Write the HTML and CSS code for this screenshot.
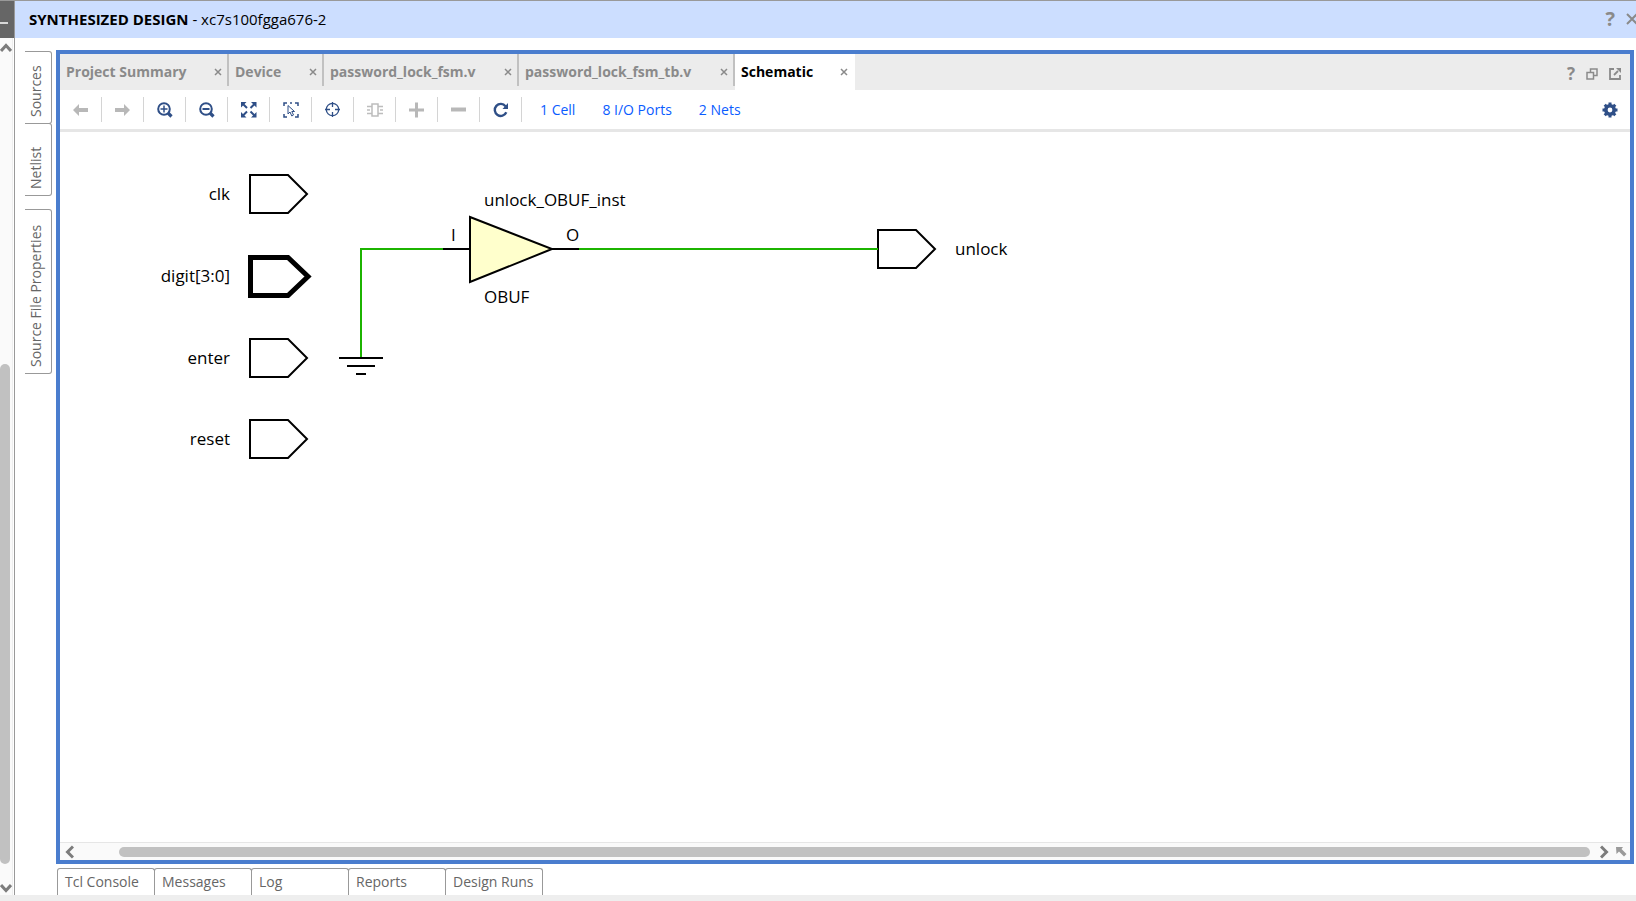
FILE: index.html
```html
<!DOCTYPE html>
<html lang="en">
<head>
<meta charset="utf-8">
<title>Synthesized Design</title>
<link rel="stylesheet" href="styles.css">
</head>
<body>
<div class="app">
  <aside class="rail">
    <button class="rail-head" aria-label="Minimize"><svg width="14" height="37"><path d="M0 22H8" stroke="#d8d8d8" stroke-width="2"/></svg></button>
    <div class="vscroll">
      <button class="arrow" aria-label="Scroll up"><svg width="12" height="20"><path d="M1 13L6 7.500L11 13" fill="none" stroke="#7c7c7c" stroke-width="3"/></svg></button>
      <div class="vtrack"><div class="vthumb"></div></div>
      <button class="arrow" aria-label="Scroll down"><svg width="12" height="20"><path d="M1 10L6 15.500L11 10" fill="none" stroke="#7c7c7c" stroke-width="3"/></svg></button>
    </div>
  </aside>
  <div class="main">
    <header class="title">
      <h1>SYNTHESIZED DESIGN<span> - xc7s100fgga676-2</span></h1>
      <button class="help big" aria-label="Help">?</button>
      <button class="close-big" aria-label="Close"><svg width="10" height="12"><path d="M1 1L11 11M11 1L1 11" stroke="#8a8a8a" stroke-width="2"/></svg></button>
    </header>
    <div class="work">
      <nav class="side">
        <button>Sources</button>
        <button>Netlist</button>
        <button class="tall">Source File Properties</button>
      </nav>
      <div class="center">
        <section class="panel">
          <div class="tabs">
            <div class="tab t1"><button class="name">Project Summary</button><button class="x" aria-label="Close tab"><svg width="8" height="8"><path d="M1 1L7 7M7 1L1 7"/></svg></button></div>
            <div class="tab t2"><button class="name">Device</button><button class="x" aria-label="Close tab"><svg width="8" height="8"><path d="M1 1L7 7M7 1L1 7"/></svg></button></div>
            <div class="tab t3"><button class="name">password_lock_fsm.v</button><button class="x" aria-label="Close tab"><svg width="8" height="8"><path d="M1 1L7 7M7 1L1 7"/></svg></button></div>
            <div class="tab t4"><button class="name">password_lock_fsm_tb.v</button><button class="x" aria-label="Close tab"><svg width="8" height="8"><path d="M1 1L7 7M7 1L1 7"/></svg></button></div>
            <div class="tab t5 active"><button class="name">Schematic</button><button class="x" aria-label="Close tab"><svg width="8" height="8"><path d="M1 1L7 7M7 1L1 7"/></svg></button></div>
            <div class="panel-actions">
              <button class="help" aria-label="Help">?</button>
              <button aria-label="Restore"><svg width="12" height="12" fill="none" stroke="#8a8a8a" stroke-width="1.500"><path d="M4.500 4V1H11V7.500H8"/><path d="M1 4.500H7.500V11H1Z"/></svg></button>
              <button aria-label="Float"><svg width="12" height="12" fill="none" stroke="#8a8a8a" stroke-width="1.800"><path d="M5 1H1V11H11V7"/><path d="M5 7L9 3"/><path d="M7 0H12V5Z" fill="#8a8a8a" stroke="none"/></svg></button>
            </div>
          </div>
          <div class="toolbar">
            <button class="tool" aria-label="Previous"><svg width="16" height="16"><path d="M0 8L6 2V6H15V10H6V14Z" fill="#b8b8b8"/></svg></button>
            <button class="tool" aria-label="Next"><svg width="16" height="16"><path d="M15 8L9 2V6H0V10H9V14Z" fill="#b8b8b8"/></svg></button>
            <button class="tool" aria-label="Zoom in"><svg width="16" height="16" fill="none" stroke="#2f4f87"><circle cx="7" cy="7" r="5.800" stroke-width="2"/><path d="M3.500 7H10.500M7 3.500V10.500" stroke-width="1.500"/><path d="M11 11L14.500 14.500" stroke-width="3.200"/></svg></button>
            <button class="tool" aria-label="Zoom out"><svg width="16" height="16" fill="none" stroke="#2f4f87"><circle cx="7" cy="7" r="5.800" stroke-width="2"/><path d="M3.500 7H10.500" stroke-width="2"/><path d="M11 11L14.500 14.500" stroke-width="3.200"/></svg></button>
            <button class="tool" aria-label="Zoom fit"><svg width="16" height="16"><g fill="#2f4f87"><path d="M0 0H5.500L0 5.500ZM15.500 0V5.500L10 0ZM0 15.500V10L5.500 15.500ZM15.500 15.500H10L15.500 10Z"/></g><path d="M2 2L6 6M13.500 2L9.500 6M2 13.500L6 9.500M13.500 13.500L9.500 9.500" stroke="#2f4f87" stroke-width="2"/></svg></button>
            <button class="tool" aria-label="Select area"><svg width="16" height="16" fill="none" stroke="#2f4f87"><path d="M1 4V1H4M7 1H9M12 1H15V4M1 12V15H4M12 15H15V12" stroke-width="1.500"/><path d="M5 3.500V12L7 10L8.800 14L10.500 13L8.800 9.500H11.500Z" stroke-width="1"/></svg></button>
            <button class="tool" aria-label="Autofit selection"><svg width="16" height="16" fill="none" stroke="#2f4f87" stroke-width="1.300"><circle cx="7.500" cy="7.500" r="6.200"/><path d="M7.500 0V5M7.500 10V15M0 7.500H5M10 7.500H15"/></svg></button>
            <button class="tool" aria-label="Expand cell"><svg width="16" height="16" fill="none" stroke="#bdbdbd" stroke-width="1.500"><path d="M5 2H11V14H5Z"/><path d="M0 4.500H5M0 8H3M0 11.500H5M11 4.500H16M13 8H16M11 11.500H16"/></svg></button>
            <button class="tool" aria-label="Add"><svg width="16" height="16"><path d="M0 8H15M7.500 0.500V15.500" stroke="#b8b8b8" stroke-width="3"/></svg></button>
            <button class="tool" aria-label="Remove"><svg width="16" height="16"><path d="M0 7.500H15" stroke="#b8b8b8" stroke-width="4"/></svg></button>
            <button class="tool" aria-label="Regenerate"><svg width="16" height="16"><path d="M12.500 4.200A6 6 0 1 0 13.300 10.300" fill="none" stroke="#2f4f87" stroke-width="2.400"/><path d="M15 1V7H9.500Z" fill="#2f4f87"/></svg></button>
            <a href="#cells">1 Cell</a>
            <a href="#ports">8 I/O Ports</a>
            <a href="#nets">2 Nets</a>
            <button class="gear" aria-label="Settings"><svg width="16" height="16"><g stroke="#2f4f87"><circle cx="8" cy="8" r="4.200" fill="none" stroke-width="3.600"/><path d="M8 0.500V3M8 13V15.500M0.500 8H3M13 8H15.500M2.700 2.700L4.500 4.500M11.500 11.500L13.300 13.300M13.300 2.700L11.500 4.500M4.500 11.500L2.700 13.300" stroke-width="3"/></g></svg></button>
          </div>
          <div class="canvas">
            <svg class="schematic" role="img" aria-label="Schematic">
              <g class="port">
                <path d="M190 43H228L247 62L228 81H190Z"/>
                <path class="bus" d="M190.500 125.500H228L248 144.500L228 163.500H190.500Z"/>
                <path d="M190 207H228L247 226L228 245H190Z"/>
                <path d="M190 288H228L247 307L228 326H190Z"/>
                <path d="M818 98H856L875 117L856 136H818Z"/>
              </g>
              <path class="net" d="M301 226V117H383M519 117H818"/>
              <path class="pin" d="M383 117H410M492 117H519M279 226H323M287 234H315M296 242H306"/>
              <path class="cell" d="M410 85L492 117L410 150Z"/>
              <g class="end">
                <text x="170" y="68">clk</text>
                <text x="170" y="150">digit[3:0]</text>
                <text x="170" y="232">enter</text>
                <text x="170" y="313">reset</text>
              </g>
              <text x="424" y="74">unlock_OBUF_inst</text>
              <text x="391" y="109">I</text>
              <text x="506" y="109">O</text>
              <text x="424" y="171">OBUF</text>
              <text x="895" y="123">unlock</text>
            </svg>
          </div>
          <div class="hscroll">
            <button class="harrow" aria-label="Scroll left"><svg width="9" height="14"><path d="M8 1.500L2.500 7L8 12.500" fill="none" stroke="#7c7c7c" stroke-width="3"/></svg></button>
            <div class="htrack"><div class="hthumb"></div></div>
            <button class="harrow" aria-label="Scroll right"><svg width="9" height="14"><path d="M1 1.500L6.500 7L1 12.500" fill="none" stroke="#7c7c7c" stroke-width="3"/></svg></button>
            <button class="corner" aria-label="Overview"><svg width="11" height="12"><path d="M0 1H7L5.500 3L10.500 8L8 10.500L3 5.500L0.500 8Z" fill="#9a9a9a"/></svg></button>
          </div>
        </section>
        <nav class="bottom">
          <button>Tcl Console</button>
          <button>Messages</button>
          <button>Log</button>
          <button>Reports</button>
          <button>Design Runs</button>
        </nav>
      </div>
    </div>
  </div>
</div>
<footer class="status"></footer>
</body>
</html>
```
FILE: styles.css
```css
* { box-sizing: border-box; }
body {
  margin: 0;
  height: 100vh;
  display: flex;
  flex-direction: column;
  overflow: hidden;
  background: #fff;
  color: #000;
  font: 14px/20px "Open Sans", "Noto Sans", sans-serif;
}
button {
  margin: 0;
  padding: 0;
  border: 0;
  background: none;
  color: inherit;
  font: inherit;
}
svg { display: block; }
.app {
  flex: 1;
  min-height: 0;
  display: flex;
  border-top: 1px solid #999;
}
.status { height: 6px; background: #eee; }

.rail {
  width: 15px;
  display: flex;
  flex-direction: column;
  border-right: 1px solid #999;
}
.rail-head { height: 37px; background: #666; }
.vscroll {
  flex: 1;
  display: flex;
  flex-direction: column;
  width: 13px;
  background: #fafafa;
  border-right: 1px solid #eee;
}
.arrow { height: 20px; }
.vtrack {
  flex: 1;
  display: flex;
  flex-direction: column;
  justify-content: flex-end;
  padding-bottom: 11px;
}
.vthumb {
  width: 10px;
  height: 62%;
  border-radius: 5px;
  background: #c1c1c1;
}

.main { flex: 1; min-width: 0; display: flex; flex-direction: column; }
.title {
  height: 37px;
  display: flex;
  align-items: center;
  padding: 0 0 2px 14px;
  background: #ccdeff;
}
.title h1 { flex: 1; margin: 0; font-size: 15px; font-weight: 700; }
.title span { font-weight: 400; white-space: pre; }
.help { color: #8a8a8a; font-size: 17px; font-weight: 700; }
.big { font-size: 20px; }
.close-big { margin-left: 11px; }

.work {
  flex: 1;
  min-height: 0;
  display: flex;
  padding: 12px 2px 0 10px;
}
.side {
  width: 27px;
  margin-right: 4px;
  padding-top: 1px;
  display: flex;
  flex-direction: column;
  align-items: stretch;
}
.side button {
  writing-mode: vertical-rl;
  transform: rotate(180deg);
  height: 73px;
  padding: 6px 0 6px 4px;
  border: 1px solid #999;
  border-right: 0;
  border-radius: 3px 0 0 3px;
  color: #666;
  text-align: left;
  line-height: 22px;
  white-space: nowrap;
}
.side button + button { margin-top: -1px; }
.side .tall { height: 165px; }
.side button.tall { margin-top: 13px; }

.center { flex: 1; min-width: 0; display: flex; flex-direction: column; }
.panel {
  flex: 1;
  min-height: 0;
  display: flex;
  flex-direction: column;
  border: 4px solid #4a7dce;
}
.tabs { height: 36px; display: flex; background: #ececec; color: #8a8a8a; }
.tab {
  display: flex;
  align-items: center;
  justify-content: space-between;
  height: 32px;
  padding: 4px 5px 0 6px;
  border-right: 2px solid #c1c1c1;
}
.t1 { width: 169px; }
.t2 { width: 95px; }
.t3 { width: 195px; }
.t4 { width: 216px; }
.t5 { width: 120px; }
.name { font-weight: 700; white-space: nowrap; }
.x path { stroke: #8a8a8a; stroke-width: 1.5; }
.tab.active { height: 36px; padding: 0 7px 0 6px; border: 0; background: #fff; color: #000; }
.panel-actions {
  margin-left: auto;
  display: flex;
  align-items: center;
  gap: 11px;
  padding: 4px 9px 0 0;
}

.toolbar {
  display: flex;
  align-items: center;
  height: 42px;
  border-bottom: 3px solid #e6e6e6;
}
.tool {
  width: 42px;
  height: 25px;
  padding-left: 13px;
  border-right: 1px solid #d4d4d4;
}
.toolbar a { margin-left: 27px; color: #0a5cff; text-decoration: none; }
.toolbar .tool + a { margin-left: 18px; }
.gear { margin-left: auto; margin-right: 12px; }

.canvas { flex: 1; min-height: 0; }
.schematic { width: 100%; height: 100%; font-size: 17px; }
.port path { fill: #fff; stroke: #000; stroke-width: 2; }
.port .bus { stroke-width: 5; }
.net { fill: none; stroke: #1cb400; stroke-width: 2; }
.pin { stroke: #000; stroke-width: 2; }
.cell { fill: #ffffcc; stroke: #000; stroke-width: 2; }
.end { text-anchor: end; }

.hscroll {
  display: flex;
  align-items: center;
  height: 18px;
  padding: 0 3px 0 5px;
  border-top: 1px solid #e6e6e6;
  background: #fafafa;
}
.htrack { flex: 1; padding: 0 10px 0 45px; }
.hthumb { height: 10px; border-radius: 5px; background: #c1c1c1; }
.corner { margin-left: 7px; }

.bottom { display: flex; padding: 4px 0 0 1px; }
.bottom button {
  width: 98px;
  height: 27px;
  margin-right: -1px;
  padding-left: 7px;
  border: 1px solid #999;
  border-bottom: 0;
  border-radius: 3px 3px 0 0;
  color: #666;
  text-align: left;
  white-space: nowrap;
}
```
